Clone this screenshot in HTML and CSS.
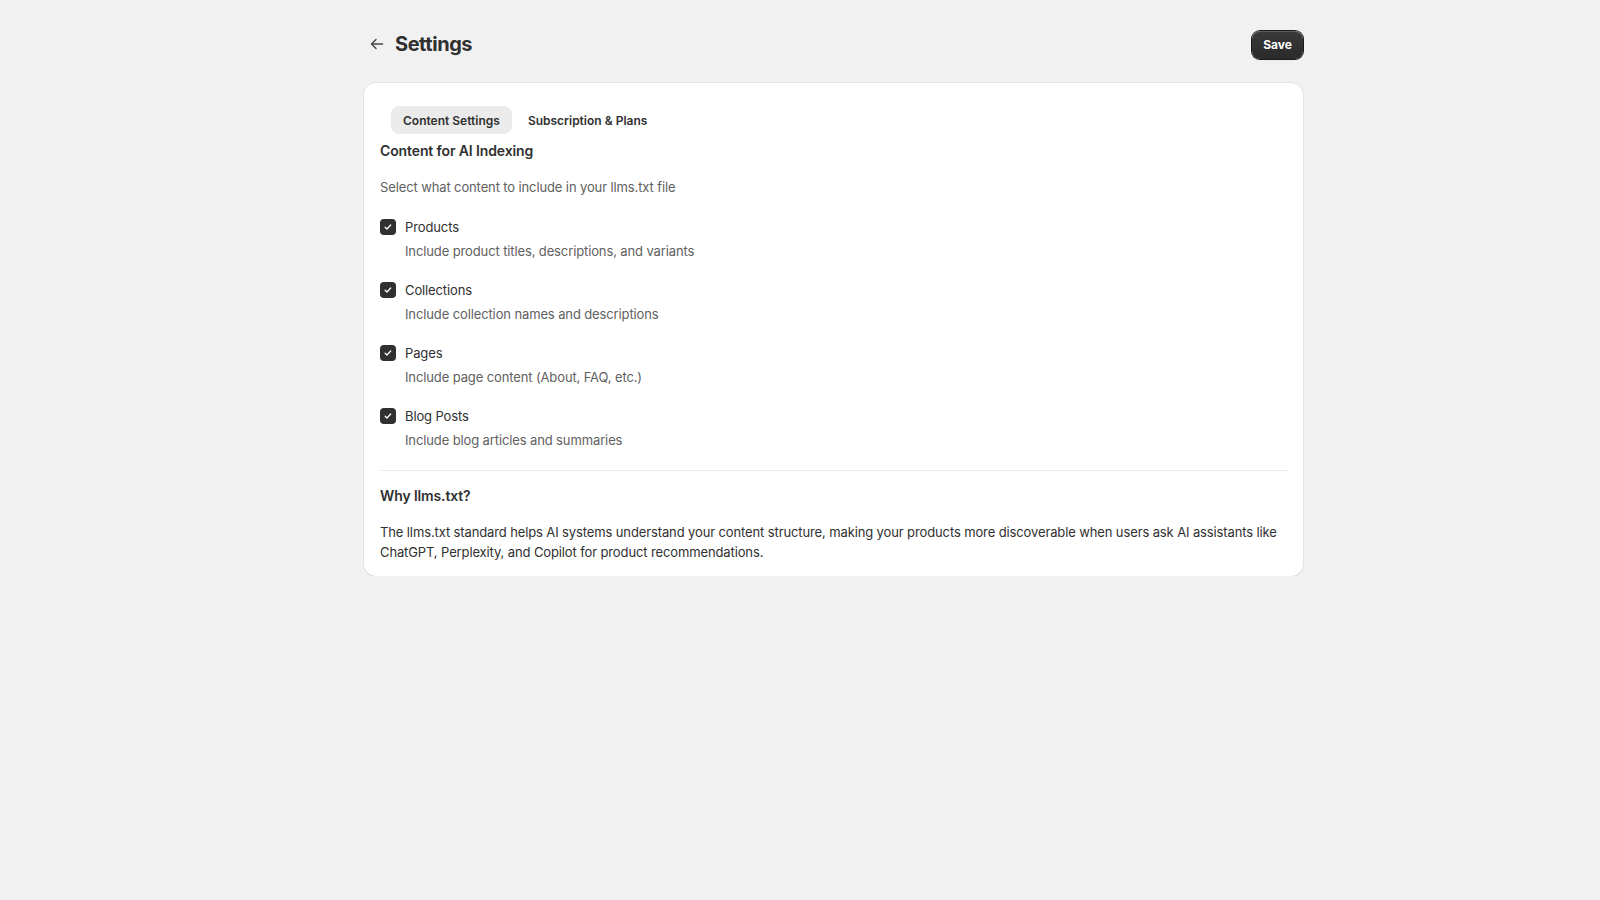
FILE: index.html
```html
<!DOCTYPE html>
<html lang="en">
<head>
  <meta charset="UTF-8" />
  <meta name="viewport" content="width=device-width, initial-scale=1.0"/>
  <title>Settings</title>
  <link rel="stylesheet" href="styles.css">
</head>
<body>
  <div class="page">
    <div class="header">
      <div class="title-wrap">
        <button class="back" aria-label="Back">
          <svg viewBox="0 0 20 20" width="20" height="20"><path d="M16.25 10a.75.75 0 0 1-.75.75H6.31l3.22 3.22a.75.75 0 1 1-1.06 1.06l-4.5-4.5a.75.75 0 0 1 0-1.06l4.5-4.5a.75.75 0 0 1 1.06 1.06L6.31 9.25h9.19a.75.75 0 0 1 .75.75Z" fill="#4a4a4a"/></svg>
        </button>
        <h1>Settings</h1>
      </div>
      <button class="save">Save</button>
    </div>

    <div class="card">
      <div class="tabs">
        <button class="tab active">Content Settings</button>
        <button class="tab">Subscription &amp; Plans</button>
      </div>

      <h2>Content for AI Indexing</h2>
      <p class="sub">Select what content to include in your llms.txt file</p>

      <div class="options">
        <label class="option">
          <span class="row"><span class="box"><svg viewBox="0 0 16 16" width="12" height="12"><path d="M4.2 8.3l2.4 2.3 5-5.2" fill="none" stroke="#fff" stroke-width="1.7" stroke-linecap="round" stroke-linejoin="round"/></svg></span>Products</span>
          <span class="help">Include product titles, descriptions, and variants</span>
        </label>
        <label class="option">
          <span class="row"><span class="box"><svg viewBox="0 0 16 16" width="12" height="12"><path d="M4.2 8.3l2.4 2.3 5-5.2" fill="none" stroke="#fff" stroke-width="1.7" stroke-linecap="round" stroke-linejoin="round"/></svg></span>Collections</span>
          <span class="help">Include collection names and descriptions</span>
        </label>
        <label class="option">
          <span class="row"><span class="box"><svg viewBox="0 0 16 16" width="12" height="12"><path d="M4.2 8.3l2.4 2.3 5-5.2" fill="none" stroke="#fff" stroke-width="1.7" stroke-linecap="round" stroke-linejoin="round"/></svg></span>Pages</span>
          <span class="help">Include page content (About, FAQ, etc.)</span>
        </label>
        <label class="option">
          <span class="row"><span class="box"><svg viewBox="0 0 16 16" width="12" height="12"><path d="M4.2 8.3l2.4 2.3 5-5.2" fill="none" stroke="#fff" stroke-width="1.7" stroke-linecap="round" stroke-linejoin="round"/></svg></span>Blog Posts</span>
          <span class="help">Include blog articles and summaries</span>
        </label>
      </div>

      <hr class="divider">

      <h2>Why llms.txt?</h2>
      <p class="about">The llms.txt standard helps AI systems understand your content structure, making your products more discoverable when users ask AI assistants like ChatGPT, Perplexity, and Copilot for product recommendations.</p>
    </div>
  </div>
</body>
</html>
```

FILE: styles.css
```css
body {
  margin: 0;
  background: #f1f1f1;
  color: #303030;
  font-family: Inter, "Noto Sans", sans-serif;
  font-size: 13px;
  line-height: 20px;
  letter-spacing: -0.12px;
}
.page {
  width: 939px;
  margin-left: 364px;
  padding-top: 30px;
}
.header {
  display: flex;
  justify-content: space-between;
  align-items: center;
  height: 28px;
}
.title-wrap {
  display: flex;
  align-items: center;
  gap: 4px;
  margin-left: -1px;
}
.back {
  width: 28px;
  height: 28px;
  padding: 0;
  border: 0;
  background: none;
  display: flex;
  align-items: center;
  justify-content: center;
}
h1 {
  margin: 0;
  font-size: 20px;
  line-height: 24px;
  font-weight: 700;
  color: #303030;
  letter-spacing: -0.45px;
}
.save {
  width: 51px;
  height: 28px;
  margin-top: 1px;
  border: 0;
  border-radius: 8px;
  background: linear-gradient(#3a3a3a, #2a2a2a);
  box-shadow: 0 0 0 1px #1a1a1a, inset 0 1px 0 rgba(255,255,255,0.18), 0 1px 1px rgba(0,0,0,0.2);
  color: #fff;
  font-family: inherit;
  font-size: 12px;
  font-weight: 700;
}
.card {
  margin-top: 25px;
  background: #fff;
  border-radius: 12px;
  box-shadow: 0 1px 0 rgba(26,26,26,0.07), 0 0 0 1px rgba(0,0,0,0.05);
  padding: 23px 16px 14px;
}
.tabs {
  display: flex;
  gap: 4px;
  padding-left: 11px;
}
.tab {
  height: 28px;
  padding: 0 12px;
  border: 0;
  border-radius: 8px;
  background: none;
  color: #303030;
  font-family: inherit;
  font-size: 12px;
  font-weight: 600;
  letter-spacing: 0;
}
.tab.active {
  background: #ebebeb;
}
h2 {
  margin: 7px 0 0;
  font-size: 14px;
  line-height: 20px;
  font-weight: 600;
}
.sub {
  margin: 16px 0 0;
  color: #616161;
}
.options {
  margin-top: 20px;
  display: flex;
  flex-direction: column;
  gap: 19px;
}
.option {
  display: flex;
  flex-direction: column;
  gap: 4px;
}
.row {
  display: flex;
  align-items: center;
  gap: 9px;
}
.box {
  width: 16px;
  height: 16px;
  border-radius: 4px;
  background: #303030;
  display: flex;
  align-items: center;
  justify-content: center;
}
.help {
  padding-left: 25px;
  color: #616161;
}
.divider {
  margin: 20px 0 15px;
  border: 0;
  border-top: 1px solid #ebebeb;
}
.divider + h2 {
  margin-top: 0;
}
.about {
  margin: 16px 0 0;
}
```
